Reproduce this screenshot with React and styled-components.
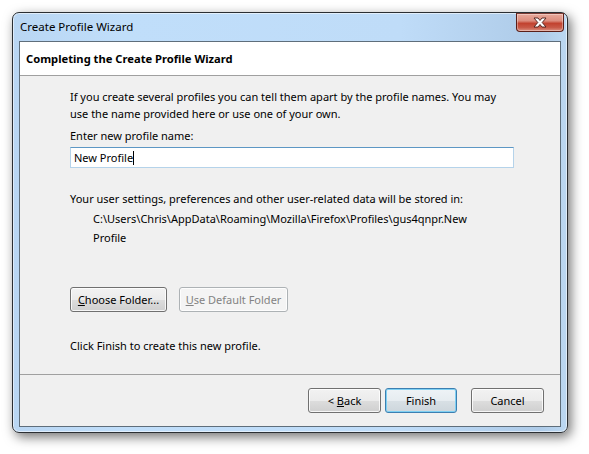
import React from "react";
import styled, { createGlobalStyle } from "styled-components";

const GlobalStyle = createGlobalStyle`
  html, body {
    margin: 0;
    padding: 0;
    background: #ffffff;
  }
  body {
    font-family: "Segoe UI", "Noto Sans", sans-serif;
    font-size: 11px;
    color: #000;
  }
`;

const Page = styled.div`
  width: 589px;
  height: 454px;
  padding: 12px 0 0 12px;
  box-sizing: border-box;
`;

const Window = styled.div`
  width: 556px;
  height: 421px;
  box-sizing: border-box;
  border: 1px solid #2b2f33;
  border-radius: 7px;
  background: linear-gradient(
    90deg,
    #b9d6f3 0%,
    #c0defa 20%,
    #bfdcf8 70%,
    #aecbe8 95%,
    #bcd8f2 100%
  );
  box-shadow: 3px 4px 12px rgba(0, 0, 0, 0.55), inset 0 0 0 1px rgba(255, 255, 255, 0.55);
  display: flex;
  flex-direction: column;
`;

const TitleBar = styled.div`
  height: 28px;
  display: flex;
  align-items: flex-start;
  justify-content: space-between;
  padding: 0 3px 0 7px;
`;

const Title = styled.div`
  font-size: 11.5px;
  line-height: 14px;
  margin-top: 7px;
  color: #000;
`;

const CloseButton = styled.div`
  width: 46px;
  height: 17px;
  border: 1px solid #5a1e18;
  border-top-color: #7a3a33;
  border-radius: 0 0 4px 4px;
  background: linear-gradient(
    180deg,
    #e9a99b 0%,
    #dc8d7e 40%,
    #c2422f 55%,
    #c85a48 80%,
    #dc9384 100%
  );
  box-shadow: inset 0 0 0 1px rgba(255, 255, 255, 0.35);
  display: flex;
  align-items: center;
  justify-content: center;
`;

const Client = styled.div`
  flex: 1;
  margin: 0 6px 5px 6px;
  border: 1px solid #5f6e7b;
  background: #f0f0f0;
  display: flex;
  flex-direction: column;
`;

const Header = styled.div`
  height: 33px;
  background: #ffffff;
  border-bottom: 1px solid #a0a0a0;
  display: flex;
  align-items: center;
  padding-left: 6px;
  font-weight: bold;
  font-size: 11.2px;
`;

const Content = styled.div`
  flex: 1;
  padding: 12px 0 0 50px;
`;

const Para = styled.div`
  line-height: 17px;
  margin-top: ${(p) => p.$top || 0}px;
`;

const PathText = styled.div`
  line-height: 19px;
  margin-top: 2px;
  padding-left: 23px;
`;

const TextBox = styled.div`
  width: 444px;
  height: 21px;
  box-sizing: border-box;
  margin-top: 3px;
  border: 1px solid #b5d3ea;
  border-top-color: #5d97c4;
  background: #ffffff;
  display: flex;
  align-items: center;
  padding-left: 3px;
`;

const Caret = styled.span`
  display: inline-block;
  width: 1px;
  height: 14px;
  background: #000;
`;

const ButtonRow = styled.div`
  display: flex;
  gap: ${(p) => p.$gap || 12}px;
  margin-top: ${(p) => p.$top || 0}px;
  justify-content: ${(p) => p.$justify || "flex-start"};
`;

const Button = styled.div`
  width: ${(p) => p.$width || 73}px;
  height: 25px;
  box-sizing: border-box;
  border: 1px solid ${(p) => (p.$disabled ? "#adb2b5" : p.$default ? "#3c7fb1" : "#707070")};
  border-radius: 3px;
  background: ${(p) =>
    p.$disabled
      ? "#f4f4f4"
      : p.$default
      ? "linear-gradient(180deg, #eef3f6 0%, #e6ecf0 50%, #d8e0e5 51%, #cdd6dc 100%)"
      : "linear-gradient(180deg, #f2f2f2 0%, #ebebeb 50%, #dddddd 51%, #cfcfcf 100%)"};
  box-shadow: inset 0 0 0 1px ${(p) => (p.$default ? "#7fd0f3" : "rgba(255,255,255,0.8)")};
  color: ${(p) => (p.$disabled ? "#838383" : "#000")};
  display: flex;
  align-items: center;
  justify-content: center;
  line-height: 1;
`;

const Footer = styled.div`
  border-top: 1px solid #a0a0a0;
  padding: 13px 16px 13px 0;
`;

const Spacer = styled.div`
  width: ${(p) => p.$w}px;
`;

const CloseGlyph = () => (
  <svg width="16" height="11" viewBox="0 0 16 11">
    <path
      d="M2 1 H6 L8 3.5 L10 1 H14 L10.2 5.5 L14 10 H10 L8 7.5 L6 10 H2 L5.8 5.5 Z"
      fill="#ffffff"
      stroke="#4a1c17"
      strokeWidth="0.9"
      strokeLinejoin="round"
    />
  </svg>
);

export default function App() {
  return (
    <>
      <GlobalStyle />
      <Page>
        <Window>
          <TitleBar>
            <Title>Create Profile Wizard</Title>
            <CloseButton>
              <CloseGlyph />
            </CloseButton>
          </TitleBar>
          <Client>
            <Header>Completing the Create Profile Wizard</Header>
            <Content>
              <Para>
                If you create several profiles you can tell them apart by the profile names. You may
                <br />
                use the name provided here or use one of your own.
              </Para>
              <Para $top={5}>Enter new profile name:</Para>
              <TextBox>
                New Profile
                <Caret />
              </TextBox>
              <Para $top={22}>
                Your user settings, preferences and other user-related data will be stored in:
              </Para>
              <PathText>
                C:\Users\Chris\AppData\Roaming\Mozilla\Firefox\Profiles\gus4qnpr.New
                <br />
                Profile
              </PathText>
              <ButtonRow $top={40} $gap={12}>
                <Button $width={97}>
                  <span>
                    <u>C</u>hoose Folder...
                  </span>
                </Button>
                <Button $width={109} $disabled>
                  <span>
                    <u>U</u>se Default Folder
                  </span>
                </Button>
              </ButtonRow>
              <Para $top={25}>Click Finish to create this new profile.</Para>
            </Content>
            <Footer>
              <ButtonRow $justify="flex-end" $gap={4}>
                <Button>
                  <span>
                    &lt;&nbsp;<u>B</u>ack
                  </span>
                </Button>
                <Button $default $width={72}>
                  Finish
                </Button>
                <Spacer $w={6} />
                <Button>Cancel</Button>
              </ButtonRow>
            </Footer>
          </Client>
        </Window>
      </Page>
    </>
  );
}
